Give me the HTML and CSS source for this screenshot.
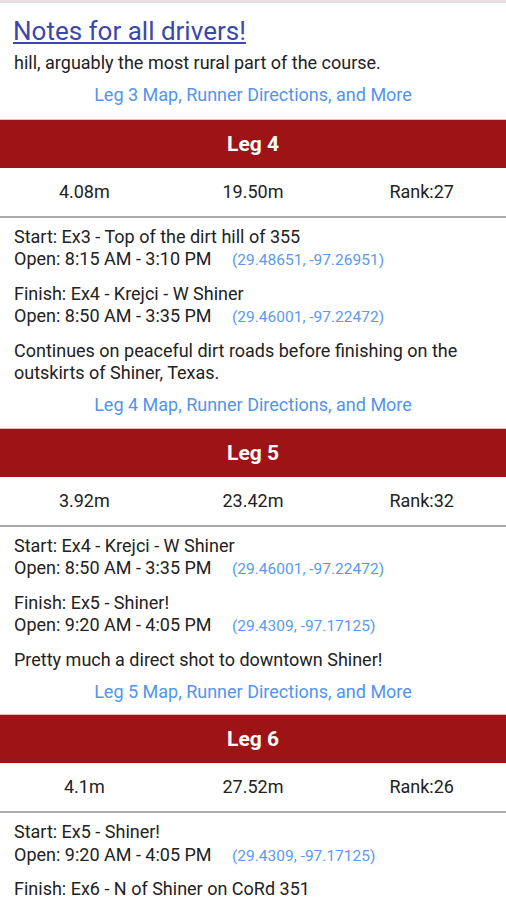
FILE: index.html
```html
<!DOCTYPE html>
<html lang="en">
<head>
  <meta charset="UTF-8">
  <title>Driver Notes</title>
  <link rel="stylesheet" href="styles.css">
</head>
<body>

  <div class="top">
    <a class="titulo" href="#">Notes for all drivers!</a>
    <p class="desc">hill, arguably the most rural part of the course.</p>
    <a class="mas" href="#">Leg 3 Map, Runner Directions, and More</a>
  </div>

  <div class="leg">
    <div class="barra">Leg 4</div>
    <div class="stats">
      <span>4.08m</span>
      <span>19.50m</span>
      <span>Rank:27</span>
    </div>
    <div class="info">
      <p>Start: Ex3 - Top of the dirt hill of 355<br>
        Open: 8:15 AM - 3:10 PM <a class="coord" href="#">(29.48651, -97.26951)</a></p>
      <p>Finish: Ex4 - Krejci - W Shiner<br>
        Open: 8:50 AM - 3:35 PM <a class="coord" href="#">(29.46001, -97.22472)</a></p>
      <p class="desc">Continues on peaceful dirt roads before finishing on the outskirts of Shiner, Texas.</p>
      <a class="mas" href="#">Leg 4 Map, Runner Directions, and More</a>
    </div>
  </div>

  <div class="leg">
    <div class="barra">Leg 5</div>
    <div class="stats">
      <span>3.92m</span>
      <span>23.42m</span>
      <span>Rank:32</span>
    </div>
    <div class="info">
      <p>Start: Ex4 - Krejci - W Shiner<br>
        Open: 8:50 AM - 3:35 PM <a class="coord" href="#">(29.46001, -97.22472)</a></p>
      <p>Finish: Ex5 - Shiner!<br>
        Open: 9:20 AM - 4:05 PM <a class="coord" href="#">(29.4309, -97.17125)</a></p>
      <p class="desc">Pretty much a direct shot to downtown Shiner!</p>
      <a class="mas" href="#">Leg 5 Map, Runner Directions, and More</a>
    </div>
  </div>

  <div class="leg">
    <div class="barra">Leg 6</div>
    <div class="stats">
      <span>4.1m</span>
      <span>27.52m</span>
      <span>Rank:26</span>
    </div>
    <div class="info">
      <p>Start: Ex5 - Shiner!<br>
        Open: 9:20 AM - 4:05 PM <a class="coord" href="#">(29.4309, -97.17125)</a></p>
      <p>Finish: Ex6 - N of Shiner on CoRd 351</p>
    </div>
  </div>

</body>
</html>
```

FILE: styles.css
```css
body {
  margin: 0;
  font-family: Roboto, "Liberation Sans", Arial, sans-serif;
  font-size: 18px;
  line-height: 22.5px;
  color: #222;
  background: #fff;
  border-top: 3px solid #e9dee1;
}
p {
  margin: 0 0 11px;
}
.top {
  padding: 13px 14px 12px;
}
.titulo {
  display: block;
  font-size: 26px;
  line-height: 30px;
  color: #3a48ad;
  margin-left: -1px;
  margin-bottom: 6px;
}
.desc {
  margin-bottom: 9.5px;
}
.mas {
  display: block;
  text-align: center;
  color: #5294ee;
  text-decoration: none;
}
.barra {
  background: #9e1416;
  border-top: 1px solid #e7b9bb;
  color: #fff;
  font-weight: bold;
  font-size: 21px;
  line-height: 48px;
  text-align: center;
}
.stats {
  display: grid;
  grid-template-columns: 1fr 1fr 1fr;
  text-align: center;
  line-height: 48px;
  border-bottom: 2px solid #a9a9a9;
}
.info {
  padding: 8px 14px 11px;
}
.coord {
  color: #5a9af0;
  font-size: 15.5px;
  text-decoration: none;
  margin-left: 16px;
}
```
